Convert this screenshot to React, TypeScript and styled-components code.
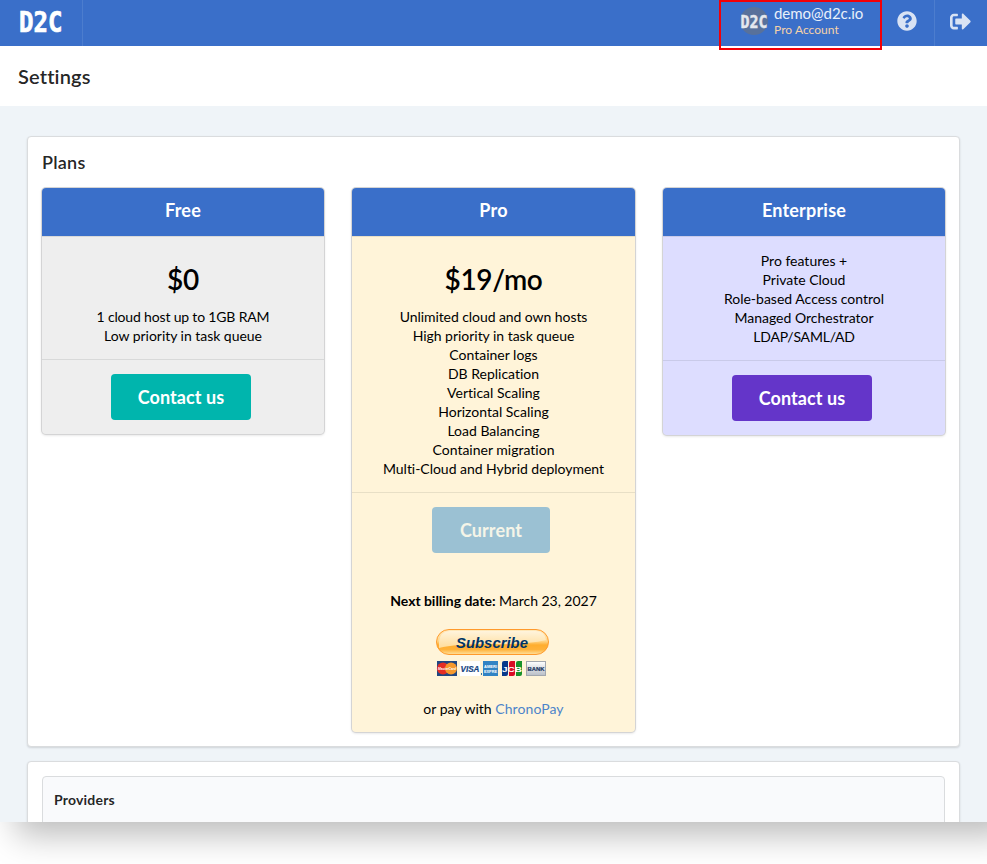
import React from "react";
import styled, { createGlobalStyle } from "styled-components";
import { FaQuestionCircle, FaSignOutAlt } from "react-icons/fa";

const GlobalStyle = createGlobalStyle`
  *, *::before, *::after { box-sizing: border-box; }
  body {
    margin: 0;
    background: #fff;
    font: 14px/19px Lato, "Open Sans", sans-serif;
    font-variant-ligatures: none;
    color: rgba(0, 0, 0, 0.87);
  }
`;

const Page = styled.div`
  width: 987px;
  height: 864px;
  overflow: hidden;
`;

const Screen = styled.div`
  height: 822px;
  display: flex;
  flex-direction: column;
  background: #eff4f8;
  box-shadow: 20px 9px 32px 4px rgba(0, 0, 0, 0.27);
  clip-path: inset(0 0 -42px 0);
`;

const TopBar = styled.header`
  flex: none;
  display: flex;
  height: 46px;
  background: #3a6fc9;
`;

const LogoCell = styled.div`
  width: 83px;
  padding: 8px 0 0 19px;
  border-right: 1px solid #4c7dce;
`;

const Account = styled.div`
  position: relative;
  z-index: 1;
  display: flex;
  width: 163px;
  height: 50px;
  margin-left: auto;
  padding: 4px 0 0 19px;
  border: 2px solid #f40006;
`;

const AccountText = styled.div`
  margin: -1px 0 0 6px;
  white-space: nowrap;
`;

const Email = styled.div`
  font-size: 15px;
  line-height: 17px;
  letter-spacing: -0.03px;
  color: #e9effa;
`;

const AccountType = styled.div`
  font-size: 12px;
  line-height: 15px;
  letter-spacing: 0.05px;
  color: #f5d2a8;
`;

const IconCell = styled.div<{ $divided?: boolean }>`
  display: flex;
  justify-content: center;
  width: ${(p) => (p.$divided ? 53 : 52)}px;
  padding: 11px 2px 0 0;
  color: #d9e3f4;
  border-left: ${(p) => (p.$divided ? "1px solid #4c7dce" : "0")};
`;

const TitleBar = styled.div`
  flex: none;
  height: 60px;
  padding: 18px;
  background: #fff;
`;

const Title = styled.h1`
  margin: 0;
  font-size: 20px;
  line-height: 25px;
  font-weight: 600;
  letter-spacing: 0.15px;
`;

const Content = styled.main`
  flex: 1;
  min-height: 0;
  overflow: hidden;
  display: flex;
  flex-direction: column;
  gap: 14px;
  padding: 30px 27px 0;
`;

const Segment = styled.section<{ $height: number }>`
  flex: none;
  height: ${(p) => p.$height}px;
  padding: 14px;
  background: #fff;
  border: 1px solid #dadcde;
  border-radius: 4px;
  box-shadow: 0 1px 2px rgba(34, 36, 38, 0.15);
`;

const SegmentTitle = styled.h2`
  margin: 0 0 14px;
  font-size: 18px;
  line-height: 23px;
  font-weight: 600;
  letter-spacing: 0.25px;
`;

const Plans = styled.div`
  display: grid;
  grid-template-columns: 282px 283px 282px;
  align-items: start;
  justify-content: space-between;
`;

const Card = styled.article<{ $bg: string }>`
  color: #000;
  text-align: center;
  background: ${(p) => p.$bg};
  border-radius: 4px;
  overflow: hidden;
  box-shadow: 0 0 0 1px #d4d4d5, 0 1px 3px #d4d4d5;
`;

const CardTitle = styled.h3`
  height: 48px;
  margin: 0;
  padding-top: 11px;
  font-size: 18px;
  line-height: 23px;
  font-weight: 700;
  letter-spacing: 0.2px;
  color: #fff;
  background: #3a6fc9;
`;

const Body = styled.div`
  padding: 14px 0;
  border-top: 1px solid rgba(34, 36, 38, 0.1);
`;

const Price = styled.div`
  margin: 13px 0 12px;
  font-size: 28px;
  line-height: 31px;
  font-weight: 600;
  letter-spacing: -0.35px;
`;

const Feature = styled.div<{ $tracking?: number }>`
  letter-spacing: ${(p) => p.$tracking ?? 0}px;
`;

const Extra = styled.div<{ $height: number }>`
  height: ${(p) => p.$height}px;
  padding-top: 14px;
  border-top: 1px solid rgba(34, 36, 38, 0.1);
`;

const Button = styled.button<{ $bg: string; $width: number }>`
  display: block;
  width: ${(p) => p.$width}px;
  height: 46px;
  margin: 0 0 0 ${(p) => Math.floor((282 - p.$width) / 2) - 2}px;
  padding: 0;
  border: 0;
  border-radius: 4px;
  background: ${(p) => p.$bg};
  font: 700 18px/46px Lato, sans-serif;
  letter-spacing: 0.1px;
  color: ${(p) => (p.disabled ? "#f5f5e8" : "#fff")};
`;

const Billing = styled.p`
  margin: 38px 0 18px;
  letter-spacing: -0.03px;
`;

const PayPal = styled.svg`
  display: block;
  margin: 0 0 0 83px;
`;

const PayWith = styled.p`
  margin: 22px 0 0;
`;

const Link = styled.a`
  color: #4d84ca;
  letter-spacing: 0.08px;
`;

const Panel = styled.div`
  height: 90px;
  padding: 13px 11px;
  border: 1px solid #dadcde;
  border-radius: 4px;
  background: #f9fafc;
  font-weight: 700;
  letter-spacing: 0.2px;
`;

const MarkSvg = styled.svg`
  display: block;
  flex: none;
  overflow: visible;
`;

const Mark = ({ x, y, size, fill }: { x: number; y: number; size: number; fill: string }) => (
  <text
    x={x}
    y={y}
    fill={fill}
    stroke={fill}
    strokeWidth={size / 40}
    fontFamily="'DejaVu Sans Mono', monospace"
    fontWeight="700"
    fontSize={size}
    textLength={size * 1.5}
    lengthAdjust="spacingAndGlyphs"
  >
    D2C
  </text>
);

const Logo = () => (
  <MarkSvg width="46" height="34" viewBox="0 0 46 34">
    <Mark x={0} y={24} size={29} fill="#fff" />
  </MarkSvg>
);

const Avatar = () => (
  <MarkSvg width="28" height="30" viewBox="0 0 28 30">
    <circle cx="14" cy="15" r="14" fill="#58719b" />
    <Mark x={0.5} y={21.5} size={18} fill="#e4e8ee" />
  </MarkSvg>
);

const SubscribeBadge = () => (
  <PayPal width="115" height="49" viewBox="0 0 115 49">
    <defs>
      <linearGradient id="pill" x1="0" y1="0" x2="0" y2="1">
        <stop offset="0" stopColor="#ffe9bd" />
        <stop offset=".45" stopColor="#ffd88e" />
        <stop offset=".62" stopColor="#ffad2e" />
        <stop offset=".8" stopColor="#ffb23a" />
        <stop offset="1" stopColor="#ffe2a0" />
      </linearGradient>
      <linearGradient id="gloss" x1="0" y1="0" x2="0" y2="1">
        <stop offset="0" stopColor="#fff4dc" />
        <stop offset="1" stopColor="#ffdc9a" />
      </linearGradient>
      <linearGradient id="bank" x1="0" y1="0" x2="0" y2="1">
        <stop offset="0" stopColor="#fff" />
        <stop offset="1" stopColor="#b9bec7" />
      </linearGradient>
    </defs>
    <rect x="1.5" y="1.5" width="112" height="25" rx="12.5" fill="url(#pill)" stroke="#ff9a2c" />
    <path d="M4 14Q5 3 15 3H100Q110 3 111 12Q90 17 56 16Q20 16 4 20Z" fill="url(#gloss)" />
    <text x="21" y="20" fill="#003366" fontFamily="'Liberation Sans', sans-serif" fontSize="15.5" fontWeight="700" fontStyle="italic" textLength="72" lengthAdjust="spacingAndGlyphs">Subscribe</text>
    <g fontFamily="'Liberation Sans', sans-serif" fontWeight="700">
      <rect x="2" y="33" width="20" height="15" fill="#204782" />
      <circle cx="8" cy="40.5" r="6" fill="#e52d25" />
      <circle cx="16" cy="40.5" r="6" fill="#f6992d" />
      <text x="3" y="42" fill="#fff" fontSize="4.2" fontStyle="italic" textLength="18" lengthAdjust="spacingAndGlyphs">MasterCard</text>
      <rect x="25" y="33" width="20" height="15" fill="#fff" />
      <text x="25.5" y="44" fill="#164482" stroke="#164482" strokeWidth=".2" fontSize="9" fontStyle="italic" textLength="19" lengthAdjust="spacingAndGlyphs">VISA</text>
      <rect x="46" y="45" width="1" height="2" fill="#3176a8" />
      <rect x="48" y="33" width="15" height="15" fill="#3183c4" />
      <text x="49" y="39.5" fill="#fff" fontSize="4" textLength="13" lengthAdjust="spacingAndGlyphs">AMERI</text>
      <text x="49" y="44.5" fill="#fff" fontSize="4" textLength="13" lengthAdjust="spacingAndGlyphs">EXPRE</text>
      <path d="M69 33H73V46Q73 48 71 48H67V35Q67 33 69 33Z" fill="#08398b" />
      <path d="M76 33H80V46Q80 48 78 48H74V35Q74 33 76 33Z" fill="#d90c25" />
      <path d="M83 33H87V46Q87 48 85 48H81V35Q81 33 83 33Z" fill="#18922a" />
      <text x="67" y="43.5" fill="#fff" fontSize="8" textLength="20" lengthAdjust="spacingAndGlyphs">JCB</text>
      <rect x="91.5" y="33.5" width="19" height="14" fill="url(#bank)" stroke="#a2a7ae" />
      <text x="92.5" y="43" fill="#1b365e" stroke="#1b365e" strokeWidth=".2" fontSize="6" textLength="17" lengthAdjust="spacingAndGlyphs">BANK</text>
    </g>
  </PayPal>
);

type FeatureItem = { label: string; tracking?: number };

const freeFeatures: FeatureItem[] = [
  { label: "1 cloud host up to 1GB RAM", tracking: -0.17 },
  { label: "Low priority in task queue", tracking: -0.03 },
];
const proFeatures: FeatureItem[] = [
  { label: "Unlimited cloud and own hosts", tracking: -0.07 },
  { label: "High priority in task queue", tracking: -0.03 },
  { label: "Container logs" },
  { label: "DB Replication" },
  { label: "Vertical Scaling" },
  { label: "Horizontal Scaling" },
  { label: "Load Balancing" },
  { label: "Container migration" },
  { label: "Multi-Cloud and Hybrid deployment", tracking: -0.03 },
];
const enterpriseFeatures: FeatureItem[] = [
  { label: "Pro features +" },
  { label: "Private Cloud" },
  { label: "Role-based Access control" },
  { label: "Managed Orchestrator" },
  { label: "LDAP/SAML/AD", tracking: -0.2 },
];

const Features = ({ items }: { items: FeatureItem[] }) => (
  <>
    {items.map((item) => (
      <Feature key={item.label} $tracking={item.tracking}>
        {item.label}
      </Feature>
    ))}
  </>
);

export default function App() {
  return (
    <Page>
      <GlobalStyle />
      <Screen>
        <TopBar>
          <LogoCell>
            <Logo />
          </LogoCell>
          <Account>
            <Avatar />
            <AccountText>
              <Email>demo@d2c.io</Email>
              <AccountType>Pro Account</AccountType>
            </AccountText>
          </Account>
          <IconCell>
            <FaQuestionCircle size={20} />
          </IconCell>
          <IconCell $divided>
            <FaSignOutAlt size={21} />
          </IconCell>
        </TopBar>
        <TitleBar>
          <Title>Settings</Title>
        </TitleBar>
        <Content>
          <Segment $height={611}>
            <SegmentTitle>Plans</SegmentTitle>
            <Plans>
              <Card $bg="#eeeeee">
                <CardTitle>Free</CardTitle>
                <Body>
                  <Price>$0</Price>
                  <Features items={freeFeatures} />
                </Body>
                <Extra $height={75}>
                  <Button $bg="#00b5ad" $width={140}>Contact us</Button>
                </Extra>
              </Card>
              <Card $bg="#fff4d9">
                <CardTitle>Pro</CardTitle>
                <Body>
                  <Price>$19/mo</Price>
                  <Features items={proFeatures} />
                </Body>
                <Extra $height={240}>
                  <Button $bg="#9bc1d3" $width={118} disabled>Current</Button>
                  <Billing>
                    <b>Next billing date:</b> March 23, 2027
                  </Billing>
                  <SubscribeBadge />
                  <PayWith>
                    or pay with <Link>ChronoPay</Link>
                  </PayWith>
                </Extra>
              </Card>
              <Card $bg="#ddddff">
                <CardTitle>Enterprise</CardTitle>
                <Body>
                  <Features items={enterpriseFeatures} />
                </Body>
                <Extra $height={75}>
                  <Button $bg="#6435c9" $width={140}>Contact us</Button>
                </Extra>
              </Card>
            </Plans>
          </Segment>
          <Segment $height={120}>
            <Panel>Providers</Panel>
          </Segment>
        </Content>
      </Screen>
    </Page>
  );
}
